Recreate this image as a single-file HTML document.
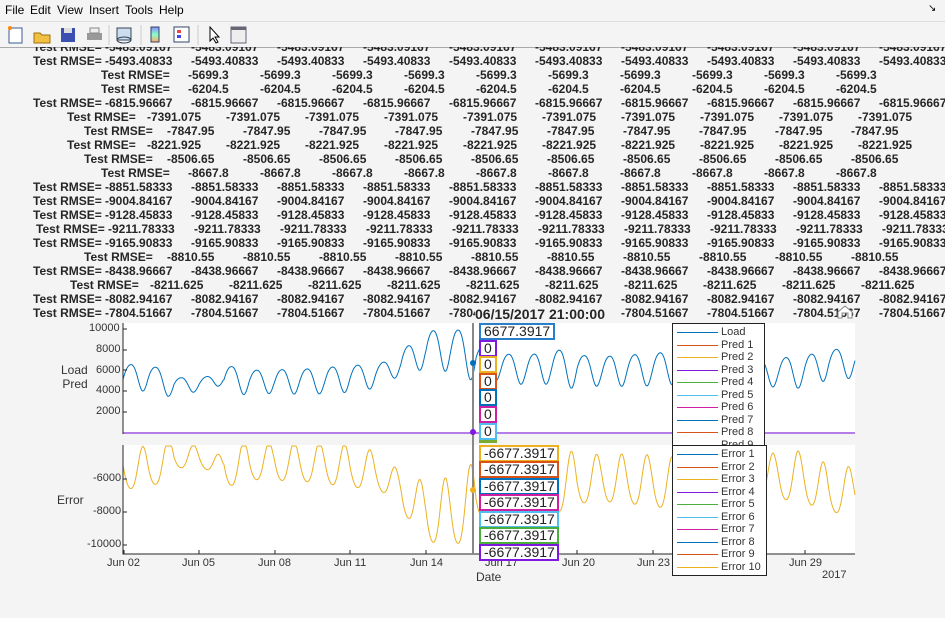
<!DOCTYPE html>
<html><head><meta charset="utf-8"><style>
body{margin:0;width:945px;height:618px;background:#f4f4f4;position:relative;overflow:hidden;font-family:"Liberation Sans",sans-serif}
.menu{position:absolute;left:0;top:0;width:945px;height:20px;background:#f4f4f4;font-size:12px}
.menu span{position:absolute;top:3px}
.tb{position:absolute;left:0;top:21px;width:945px;height:25px;background:#f4f4f4;border-top:1px solid #ddd;border-bottom:1px solid #aaa}
.row{position:absolute;font-size:12px;font-weight:bold;color:#262626;white-space:nowrap;height:14px;line-height:14px}
.row span{position:absolute;top:0}
.tip{position:absolute;background:#fff;border:2px solid;font-size:14px;line-height:13px;padding:0 3px;box-sizing:border-box;height:17px;color:#222}
.leg{position:absolute;background:#fff;border:1px solid #222;font-size:11px;color:#333;overflow:hidden}
.leg div{position:relative;height:12.5px;line-height:12.5px;padding-left:48px}
.leg i{position:absolute;left:4px;top:6px;width:41px;height:1px}
.tk{position:absolute;font-size:11px;color:#333}
</style></head><body>
<div class="menu"><span style="left:5px">File</span><span style="left:30px">Edit</span><span style="left:57px">View</span><span style="left:89px">Insert</span><span style="left:125px">Tools</span><span style="left:159px">Help</span><span style="left:928px;font-size:10px">↘</span></div>
<div class="tb">
<svg width="260" height="25">
<rect x="9" y="6" width="13" height="15" fill="#fff" stroke="#3a5c9a"/><circle cx="10" cy="6" r="2" fill="#f80"/>
<path d="M34 11h6l2 2h8v8h-16z" fill="#f0c040" stroke="#a07010"/>
<rect x="61" y="6" width="14" height="14" fill="#3a4fb0"/><rect x="64" y="6" width="8" height="5" fill="#ddd"/>
<rect x="87" y="11" width="15" height="7" fill="#999"/><rect x="90" y="6" width="9" height="5" fill="#eee" stroke="#888"/>
<line x1="109" y1="3" x2="109" y2="23" stroke="#ccc"/>
<rect x="117" y="6" width="14" height="12" fill="#cde" stroke="#345"/><ellipse cx="124" cy="18" rx="7" ry="3" fill="none" stroke="#345"/>
<line x1="141" y1="3" x2="141" y2="23" stroke="#ccc"/>
<defs><linearGradient id="g" x1="0" y1="0" x2="0" y2="1"><stop offset="0" stop-color="#88f"/><stop offset=".5" stop-color="#8fc"/><stop offset="1" stop-color="#fa6"/></linearGradient></defs>
<rect x="151" y="5" width="8" height="15" fill="url(#g)" stroke="#346"/>
<rect x="174" y="5" width="15" height="15" fill="#fff" stroke="#346"/><rect x="177" y="8" width="4" height="3" fill="#e44"/><rect x="177" y="13" width="4" height="3" fill="#44e"/>
<line x1="198" y1="3" x2="198" y2="23" stroke="#ccc"/>
<path d="M210 5v14l3-3 3 5 2-1-3-5h4z" fill="#fff" stroke="#000"/>
<rect x="231" y="5" width="15" height="16" fill="#eee" stroke="#667"/><rect x="231" y="5" width="15" height="3" fill="#667"/>
</svg></div>
<div id="rows"></div>
<svg style="position:absolute;left:0;top:0" width="945" height="618" id="pl">
<rect x="123" y="323" width="732" height="111" fill="#fff"/>
<rect x="123" y="445" width="732" height="109" fill="#fff"/>
<path id="p1" fill="none" stroke="#0072bd" stroke-width="1"/>
<path id="p2" fill="none" stroke="#edb120" stroke-width="1"/>
<line x1="123" y1="433" x2="855" y2="433" stroke="#b57ee6" stroke-width="2"/>
<path d="M123 323V434M123 445V554H855" fill="none" stroke="#262626"/>
<g stroke="#262626" id="ticks"></g>
<line x1="473" y1="323" x2="473" y2="554" stroke="#888" stroke-width="2"/>
<circle cx="473" cy="363" r="3" fill="#0072bd"/><circle cx="473" cy="432" r="3" fill="#8019e0"/><circle cx="473" cy="490" r="3" fill="#edb120"/>
<path d="M838 318v-6l7-6 7 6v6h-4v-5h-6v5z" fill="#fff" stroke="#888"/>
</svg>
<div class="tk" style="left:89px;top:322px">10000</div><div class="tk" style="left:96px;top:343px">8000</div><div class="tk" style="left:96px;top:364px">6000</div><div class="tk" style="left:96px;top:384px">4000</div><div class="tk" style="left:96px;top:405px">2000</div>
<div class="tk" style="left:93px;top:472px">-6000</div><div class="tk" style="left:93px;top:505px">-8000</div><div class="tk" style="left:87px;top:538px">-10000</div>
<div style="position:absolute;left:61px;top:363px;font-size:12px;color:#333;text-align:right;line-height:14px">Load<br>Pred</div>
<div style="position:absolute;left:57px;top:493px;font-size:12px;color:#333">Error</div>
<div class="tk" style="left:107px;top:557px">Jun 02</div><div class="tk" style="left:182px;top:557px">Jun 05</div><div class="tk" style="left:258px;top:557px">Jun 08</div><div class="tk" style="left:334px;top:557px">Jun 11</div><div class="tk" style="left:410px;top:557px">Jun 14</div><div class="tk" style="left:485px;top:557px">Jun 17</div><div class="tk" style="left:562px;top:557px">Jun 20</div><div class="tk" style="left:637px;top:557px">Jun 23</div><div class="tk" style="left:789px;top:557px">Jun 29</div><div class="tk" style="left:822px;top:569px">2017</div>
<div style="position:absolute;left:476px;top:570px;font-size:12px;color:#333">Date</div>
<div style="position:absolute;left:475px;top:307px;font-size:14px;font-weight:bold;color:#262626;background:#f4f4f4;line-height:15px">06/15/2017 21:00:00</div>
<div class="tip" style="left:479px;top:323px;width:76px;border-color:#2a7fc8">6677.3917</div>
<div class="tip" style="left:479px;top:340px;width:18px;border-color:#8019e0">0</div>
<div class="tip" style="left:479px;top:356px;width:18px;border-color:#edb120">0</div>
<div class="tip" style="left:479px;top:373px;width:18px;border-color:#d95319">0</div>
<div class="tip" style="left:479px;top:389px;width:18px;border-color:#0072bd">0</div>
<div class="tip" style="left:479px;top:406px;width:18px;border-color:#d01fa0">0</div>
<div class="tip" style="left:479px;top:423px;width:18px;border-color:#4dbeee">0</div>
<div style="position:absolute;left:479px;top:440px;width:18px;height:3px;background:#77ac30"></div>
<div class="tip" style="left:479px;top:445px;width:80px;border-color:#edb120">-6677.3917</div>
<div class="tip" style="left:479px;top:461px;width:80px;border-color:#d95319">-6677.3917</div>
<div class="tip" style="left:479px;top:478px;width:80px;border-color:#0072bd">-6677.3917</div>
<div class="tip" style="left:479px;top:494px;width:80px;border-color:#d01fa0">-6677.3917</div>
<div class="tip" style="left:479px;top:511px;width:80px;border-color:#4dbeee">-6677.3917</div>
<div class="tip" style="left:479px;top:527px;width:80px;border-color:#4cae3c">-6677.3917</div>
<div class="tip" style="left:479px;top:544px;width:80px;border-color:#8019e0">-6677.3917</div>
<div class="leg" style="left:672px;top:323px;width:91px;height:122px;padding-top:2px">
<div><i style="background:#0072bd"></i>Load</div><div><i style="background:#d95319"></i>Pred 1</div><div><i style="background:#edb120"></i>Pred 2</div><div><i style="background:#8019e0"></i>Pred 3</div><div><i style="background:#4cae3c"></i>Pred 4</div><div><i style="background:#4dbeee"></i>Pred 5</div><div><i style="background:#d01fa0"></i>Pred 6</div><div><i style="background:#0072bd"></i>Pred 7</div><div><i style="background:#d95319"></i>Pred 8</div><div><i style="background:#edb120"></i>Pred 9</div></div>
<div class="leg" style="left:672px;top:445px;width:93px;height:127px;padding-top:2px">
<div><i style="background:#0072bd"></i>Error 1</div><div><i style="background:#d95319"></i>Error 2</div><div><i style="background:#edb120"></i>Error 3</div><div><i style="background:#8019e0"></i>Error 4</div><div><i style="background:#4cae3c"></i>Error 5</div><div><i style="background:#4dbeee"></i>Error 6</div><div><i style="background:#d01fa0"></i>Error 7</div><div><i style="background:#0072bd"></i>Error 8</div><div><i style="background:#d95319"></i>Error 9</div><div><i style="background:#edb120"></i>Error 10</div></div>
<script>
var R=[[47,33,105,"-5483.09167"],[61,33,105,"-5493.40833"],[75,101,188,"-5699.3"],[89,101,188,"-6204.5"],[103,33,105,"-6815.96667"],[117,67,147,"-7391.075"],[131,84,167,"-7847.95"],[145,67,147,"-8221.925"],[159,84,167,"-8506.65"],[173,101,188,"-8667.8"],[187,33,105,"-8851.58333"],[201,33,105,"-9004.84167"],[215,33,105,"-9128.45833"],[229,36,108,"-9211.78333"],[243,33,105,"-9165.90833"],[257,84,167,"-8810.55"],[271,33,105,"-8438.96667"],[285,70,150,"-8211.625"],[299,33,105,"-8082.94167"],[313,33,105,"-7804.51667"]];
var SP={11:86,7:72,9:79,8:76};
var h="";R.forEach(function(r){var sp=SP[r[3].length];var s='<div class="row" style="left:0;top:'+(r[0]-7)+'px;width:945px"><span style="left:'+r[1]+'px">Test RMSE=</span>';for(var i=0;i<10;i++)s+='<span style="left:'+(r[2]+sp*i)+'px">'+r[3]+'</span>';h+=s+'</div>';});
var rd=document.getElementById('rows');rd.innerHTML=h;rd.style.cssText="position:absolute;left:0;top:47px;width:945px;height:274px;overflow:hidden";
rd.querySelectorAll('.row').forEach(function(e){e.style.top=(parseInt(e.style.top)-47)+'px'});
var env=[5400,5500,4700,4700,5300,5100,5000,5100,5100,5400,5600,6600,8000,8200,7400,6400,6200,6400,6300,6000,6200,6200,6500,6800,6200,5800,5900,6000,6800];
var amp=[1300,1200,700,600,1300,1100,1200,1200,1300,1200,1000,1500,2000,2200,1400,1400,1500,1800,1400,1500,1500,1600,1500,1500,1400,1300,1500,1500,1400];
var d1="",d2="";for(var x=123;x<=855;x+=1){var t=(x-123)/25.2;var k=Math.min(28,Math.floor(t));var f=t-k;var e=env[k]+(env[Math.min(28,k+1)]-env[k])*f;var a=amp[k];var ph=2*Math.PI*t;var v=e+a*(Math.sin(ph-0.3)+0.12*Math.sin(2*ph+1.2));
var y1=433-v*0.0104;var y2=479+(v-6000)*0.0165;if(y2<446)y2=446;if(y2>553)y2=553;d1+=(d1?"L":"M")+x+" "+y1.toFixed(1);d2+=(d2?"L":"M")+x+" "+y2.toFixed(1);}
document.getElementById('p1').setAttribute('d',d1);document.getElementById('p2').setAttribute('d',d2);
var tk="";[329,350,370,391,412].forEach(function(y){tk+='<line x1="123" x2="127" y1="'+y+'" y2="'+y+'"/>'});[479,512,545].forEach(function(y){tk+='<line x1="123" x2="127" y1="'+y+'" y2="'+y+'"/>'});
[124,199,275,350,426,501,577,653,729,805].forEach(function(x){tk+='<line x1="'+x+'" x2="'+x+'" y1="554" y2="550"/>'});document.getElementById('ticks').innerHTML=tk;
</script>
</body></html>
